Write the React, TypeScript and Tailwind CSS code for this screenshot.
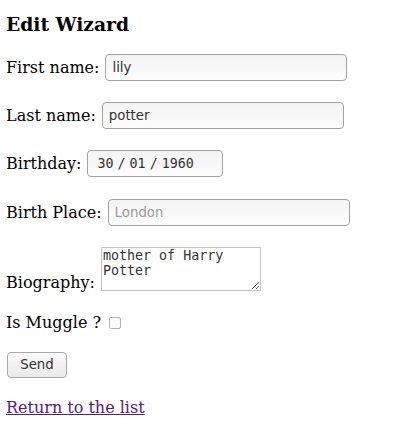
import React from "react";

const serif = "font-['DejaVu_Serif','Liberation_Serif',serif]";
const fieldBox =
  "h-[27px] rounded-[4px] border border-[#a3a3a3] bg-gradient-to-b from-[#f3f3f3] to-[#fdfdfd] px-[6px] text-[13.33px] text-[#333] font-['DejaVu_Sans','Liberation_Sans',sans-serif] outline-none";

const TextRow = ({
  label,
  value,
  placeholder,
  className,
}: {
  label: string;
  value?: string;
  placeholder?: string;
  className?: string;
}) => (
  <div className={`flex h-[27px] items-center ${className ?? ""}`}>
    <label className="leading-[19px] mr-[6px]">{label}</label>
    <input
      type="text"
      defaultValue={value}
      placeholder={placeholder}
      className={`${fieldBox} w-[242px] placeholder:text-[#9a9a9a]`}
    />
  </div>
);

export default function App() {
  return (
    <div className={`min-h-[431px] bg-white px-[6px] text-[16px] text-black ${serif}`}>
      <h3 className="pt-[13px] text-[18.72px] font-bold leading-[22px]">Edit Wizard</h3>

      <form onSubmit={(e) => e.preventDefault()}>
        <TextRow label="First name:" value="lily" className="mt-[19px]" />
        <TextRow label="Last name:" value="potter" className="mt-[21px]" />

        <div className="mt-[21px] flex h-[27px] items-center">
          <label className="leading-[19px] mr-[6px]">Birthday:</label>
          <div
            className={`${fieldBox} flex w-[136px] items-center gap-[4px] pl-[9px] font-['DejaVu_Sans_Mono','Liberation_Mono',monospace] text-[#222]`}
          >
            <span>30</span>
            <span>/</span>
            <span>01</span>
            <span>/</span>
            <span>1960</span>
          </div>
        </div>

        <TextRow label="Birth Place:" placeholder="London" className="mt-[22px]" />

        <div className="mt-[21px] flex items-end">
          <label className="leading-[19px] mr-[6px] -mb-[1px]">Biography:</label>
          <textarea
            defaultValue="mother of Harry Potter"
            className="h-[44px] w-[160px] resize border border-[#c4c4c4] px-[1px] py-0 text-[13.33px] leading-[15px] text-[#333] font-['DejaVu_Sans_Mono','Liberation_Mono',monospace] outline-none"
          />
        </div>

        <div className="mt-[22px] flex h-[19px] items-center">
          <label className="leading-[19px] mr-[8px]">Is Muggle ?</label>
          <input
            type="checkbox"
            className="h-[12px] w-[12px] appearance-none rounded-[2px] border border-[#b4b4b4] bg-gradient-to-b from-[#f8f8f8] to-white"
          />
        </div>

        <div className="mt-[20px] pl-[1px]">
          <button
            type="submit"
            className="h-[26px] w-[60px] rounded-[4px] border border-[#a8a8a8] bg-gradient-to-b from-[#fbfbfb] to-[#e9e9e9] text-[13.33px] text-[#333] font-['DejaVu_Sans','Liberation_Sans',sans-serif]"
          >
            Send
          </button>
        </div>
      </form>

      <div className="mt-[20px] leading-[19px]">
        <a href="#" className="text-[#551a8b] underline">
          Return to the list
        </a>
      </div>
    </div>
  );
}
